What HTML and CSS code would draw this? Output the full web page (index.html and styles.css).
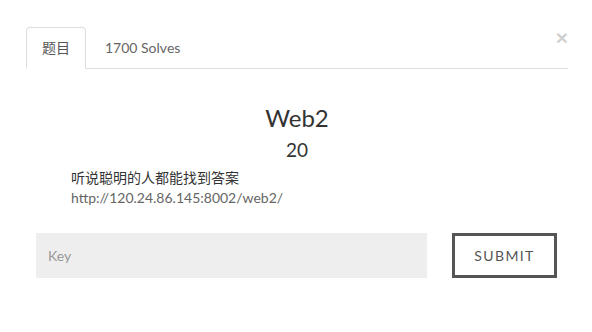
FILE: index.html
```html
<!DOCTYPE html>
<html lang="zh">
<head>
    <meta charset="UTF-8">
    <meta name="viewport" content="width=device-width, initial-scale=1.0">
    <title>Web2</title>
    <link rel="stylesheet" href="styles.css">
</head>
<body>

    <!-- Challenge Modal -->
    <div class="modal-body">
        <button type="button" class="close">&times;</button>

        <ul class="nav-tabs">
            <li class="tab-item active">题目</li>
            <li class="tab-item">1700 Solves</li>
        </ul>

        <div class="challenge">
            <h3 class="chal-name">Web2</h3>
            <h4 class="chal-value">20</h4>
            <div class="chal-desc">
                <p>听说聪明的人都能找到答案</p>
                <p class="chal-link">http://120.24.86.145:8002/web2/</p>
            </div>
        </div>

        <form class="key-form">
            <input type="text" class="key-input" placeholder="Key">
            <button type="submit" class="submit-btn">Submit</button>
        </form>
    </div>

</body>
</html>
```

FILE: styles.css
```css
body {
    margin: 0;
    font-family: 'Lato', 'Noto Sans CJK SC', sans-serif;
    font-size: 14px;
    color: #333333;
    background: #ffffff;
}

.modal-body {
    position: relative;
    padding: 27px 24px 0 26px;
}

.close {
    position: absolute;
    top: 27px;
    right: 24px;
    padding: 0;
    border: none;
    background: none;
    font-family: 'Liberation Sans', sans-serif;
    font-size: 21px;
    font-weight: bold;
    line-height: 1;
    color: #000000;
    opacity: 0.18;
}

/* Tabs */
.nav-tabs {
    display: flex;
    margin: 0;
    padding: 0;
    list-style: none;
    border-bottom: 1px solid #dddddd;
}

.tab-item {
    margin-right: 2px;
    margin-bottom: -1px;
    padding: 0 15px;
    height: 40px;
    line-height: 40px;
    color: #555555;
    border: 1px solid transparent;
    border-radius: 4px 4px 0 0;
}

.tab-item.active {
    border-color: #dddddd;
    border-bottom-color: #ffffff;
    background: #ffffff;
}

.tab-item:not(.active) {
    padding-left: 16px;
    color: #666666;
}

/* Challenge */
.challenge {
    text-align: center;
}

.chal-name {
    margin: 36px 0 0;
    font-size: 24px;
    font-weight: normal;
    line-height: 26px;
}

.chal-value {
    margin: 8px 0 0;
    font-size: 19px;
    font-weight: normal;
    line-height: 22px;
}

.chal-desc {
    margin-top: 7px;
    padding-left: 45px;
    text-align: left;
    line-height: 20px;
}

.chal-desc p {
    margin: 0;
}

.chal-link {
    color: #666666;
}

/* Key form */
.key-form {
    display: flex;
    gap: 25px;
    margin-top: 25px;
    padding: 0 11px 0 10px;
}

.key-input {
    flex: 1;
    height: 45px;
    padding: 0 12px;
    border: none;
    background: #eeeeee;
    font-family: 'Lato', sans-serif;
    font-size: 14px;
    color: #333333;
    outline: none;
}

.key-input::placeholder {
    color: #999999;
}

.submit-btn {
    width: 105px;
    height: 45px;
    border: 3px solid #555555;
    background: #ffffff;
    font-family: 'Lato', sans-serif;
    font-size: 14px;
    letter-spacing: 1.4px;
    text-transform: uppercase;
    color: #555555;
    cursor: pointer;
}
```
